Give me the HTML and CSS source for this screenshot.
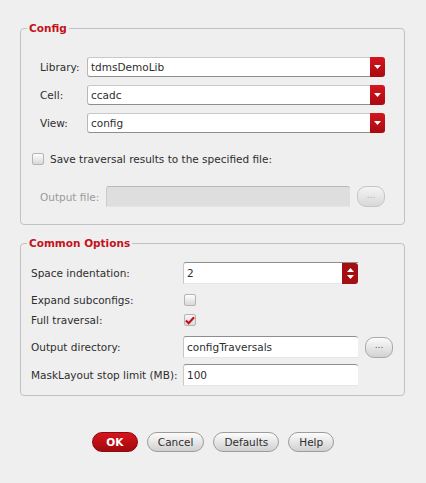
FILE: index.html
```html
<!DOCTYPE html>
<html lang="en">
<head>
<meta charset="UTF-8">
<title>Traverse Config</title>
<link rel="stylesheet" href="styles.css">
</head>
<body>

<div class="dialog">

<!-- Config group -->
<fieldset class="group">
<legend>Config</legend>
<div class="group-body config-body">
<div class="combo-row">
<label>Library:</label>
<div class="combo"><span class="value">tdmsDemoLib</span><span class="drop"><svg width="7" height="4" viewBox="0 0 7 4"><path d="M0 0h7L3.5 4z" fill="#fff"/></svg></span></div>
</div>
<div class="combo-row">
<label>Cell:</label>
<div class="combo"><span class="value">ccadc</span><span class="drop"><svg width="7" height="4" viewBox="0 0 7 4"><path d="M0 0h7L3.5 4z" fill="#fff"/></svg></span></div>
</div>
<div class="combo-row">
<label>View:</label>
<div class="combo"><span class="value">config</span><span class="drop"><svg width="7" height="4" viewBox="0 0 7 4"><path d="M0 0h7L3.5 4z" fill="#fff"/></svg></span></div>
</div>

<div class="save-row">
<span class="checkbox"></span>
<span>Save traversal results to the specified file:</span>
</div>

<div class="file-row">
<label class="disabled">Output file:</label>
<div class="field field-disabled"></div>
<button class="browse" disabled>...</button>
</div>
</div>
</fieldset>

<!-- Common options group -->
<fieldset class="group">
<legend>Common Options</legend>
<div class="group-body options-body">
<div class="opt-row">
<label>Space indentation:</label>
<div class="field spin-field"><span class="value">2</span><span class="spin"><svg width="7" height="11" viewBox="0 0 7 11"><path d="M0 4h7L3.5 0z M0 7h7L3.5 11z" fill="#fff"/></svg></span></div>
</div>
<div class="opt-row check">
<label>Expand subconfigs:</label>
<span class="checkbox"></span>
</div>
<div class="opt-row check">
<label>Full traversal:</label>
<span class="checkbox checked"><svg width="11" height="9" viewBox="0 0 11 9"><path d="M1 4.5l3 3L10 1" fill="none" stroke="#c8101a" stroke-width="2.4"/></svg></span>
</div>
<div class="opt-row">
<label>Output directory:</label>
<div class="field wide"><span class="value">configTraversals</span></div>
<button class="browse">...</button>
</div>
<div class="opt-row">
<label>MaskLayout stop limit (MB):</label>
<div class="field wide"><span class="value">100</span></div>
</div>
</div>
</fieldset>

<div class="buttons">
<button class="btn btn-ok">OK</button>
<button class="btn">Cancel</button>
<button class="btn">Defaults</button>
<button class="btn">Help</button>
</div>

</div>

</body>
</html>
```

FILE: styles.css
```css
body {
margin: 0;
background-color: #efefef;
font-family: "DejaVu Sans", sans-serif;
font-size: 10.5px;
color: #2e2e2e;
}

.dialog {
padding: 21px 21px 0 20px;
}

.group {
margin: 0 0 11px 0;
padding: 0;
border: 1px solid #c2c2c2;
border-radius: 4px;
}

.group legend {
margin-left: 6px;
padding: 0 2px;
line-height: 14px;
font-weight: bold;
color: #c4121a;
}

.config-body {
padding: 22px 19px 17px 19px;
}

.options-body {
padding: 12px 11px 9px 10px;
}

.combo-row {
display: flex;
align-items: center;
height: 20px;
margin-bottom: 8px;
}

.combo-row label {
width: 47px;
}

.combo {
flex: 1;
display: flex;
height: 20px;
}

.combo .value {
flex: 1;
display: flex;
align-items: center;
padding-left: 3px;
background-color: #fff;
border-top: 1px solid #c8c8c8;
border-bottom: 1px solid #8e8e8e;
border-left: 1px solid #b8b8b8;
border-radius: 3px 0 0 3px;
}

.drop {
width: 15px;
display: flex;
align-items: center;
justify-content: center;
background: linear-gradient(#d4161e, #a80a10);
border-radius: 0 3px 3px 0;
}

.save-row {
display: flex;
align-items: center;
gap: 6px;
height: 20px;
margin-top: 16px;
margin-left: -8px;
}

.checkbox {
display: inline-flex;
align-items: center;
justify-content: center;
width: 10px;
height: 10px;
border: 1px solid #b4b4b4;
border-radius: 2px;
background: linear-gradient(#fdfdfd, #d8d8d8);
}

.checkbox.checked {
background: linear-gradient(#f6f6f6, #dcdcdc);
}

.file-row {
display: flex;
align-items: center;
height: 21px;
margin-top: 17px;
}

.file-row label {
width: 66px;
}

.disabled {
color: #9a9a9a;
}

.field {
display: flex;
align-items: center;
height: 21px;
box-sizing: border-box;
background-color: #fff;
border-top: 1px solid #8e8e8e;
border-left: 1px solid #c8c8c8;
border-bottom: 1px solid #e6e6e6;
border-radius: 3px 3px 0 0;
}

.field .value {
padding-left: 3px;
}

.field-disabled {
width: 244px;
background-color: #dedede;
border-color: #b8b8b8 #d6d6d6 #e4e4e4 #cccccc;
}

.browse {
width: 28px;
height: 21px;
margin-left: 7px;
padding: 0 0 4px 0;
font-family: inherit;
font-size: 9px;
color: #555;
border: 1px solid #aaa;
border-radius: 9px;
background: linear-gradient(#fbfbfb, #d2d2d2);
}

.browse[disabled] {
color: #aaa;
border-color: #c6c6c6;
background: linear-gradient(#f4f4f4, #d8d8d8);
}

.opt-row {
display: flex;
align-items: center;
height: 22px;
margin-top: 6px;
}

.opt-row:first-child {
margin-top: 0;
}

.opt-row.check {
height: 20px;
}

.opt-row.check + .opt-row.check {
margin-top: 0;
}

.opt-row label {
width: 152px;
flex-shrink: 0;
}

.opt-row .checkbox {
margin-left: 1px;
}

.spin-field {
width: 175px;
height: 22px;
border-radius: 3px 0 0 0;
}

.spin-field .value {
flex: 1;
}

.spin {
width: 16px;
height: 21px;
display: flex;
align-items: center;
justify-content: center;
background-color: #a50e12;
border-radius: 0 3px 3px 0;
}

.field.wide {
width: 175px;
height: 22px;
}

.buttons {
display: flex;
justify-content: center;
gap: 9px;
margin-top: 36px;
padding-left: 1px;
}

.btn {
height: 20px;
padding: 0 10px;
font-family: inherit;
font-size: 10.5px;
color: #2e2e2e;
border: 1px solid #9c9c9c;
border-radius: 10px;
background: linear-gradient(#fcfcfc, #d0d0d0);
}

.btn-ok {
width: 46px;
font-weight: bold;
color: #fff;
border-color: #8a0a0e;
background: linear-gradient(#d8141c, #a00a0e);
}
```
